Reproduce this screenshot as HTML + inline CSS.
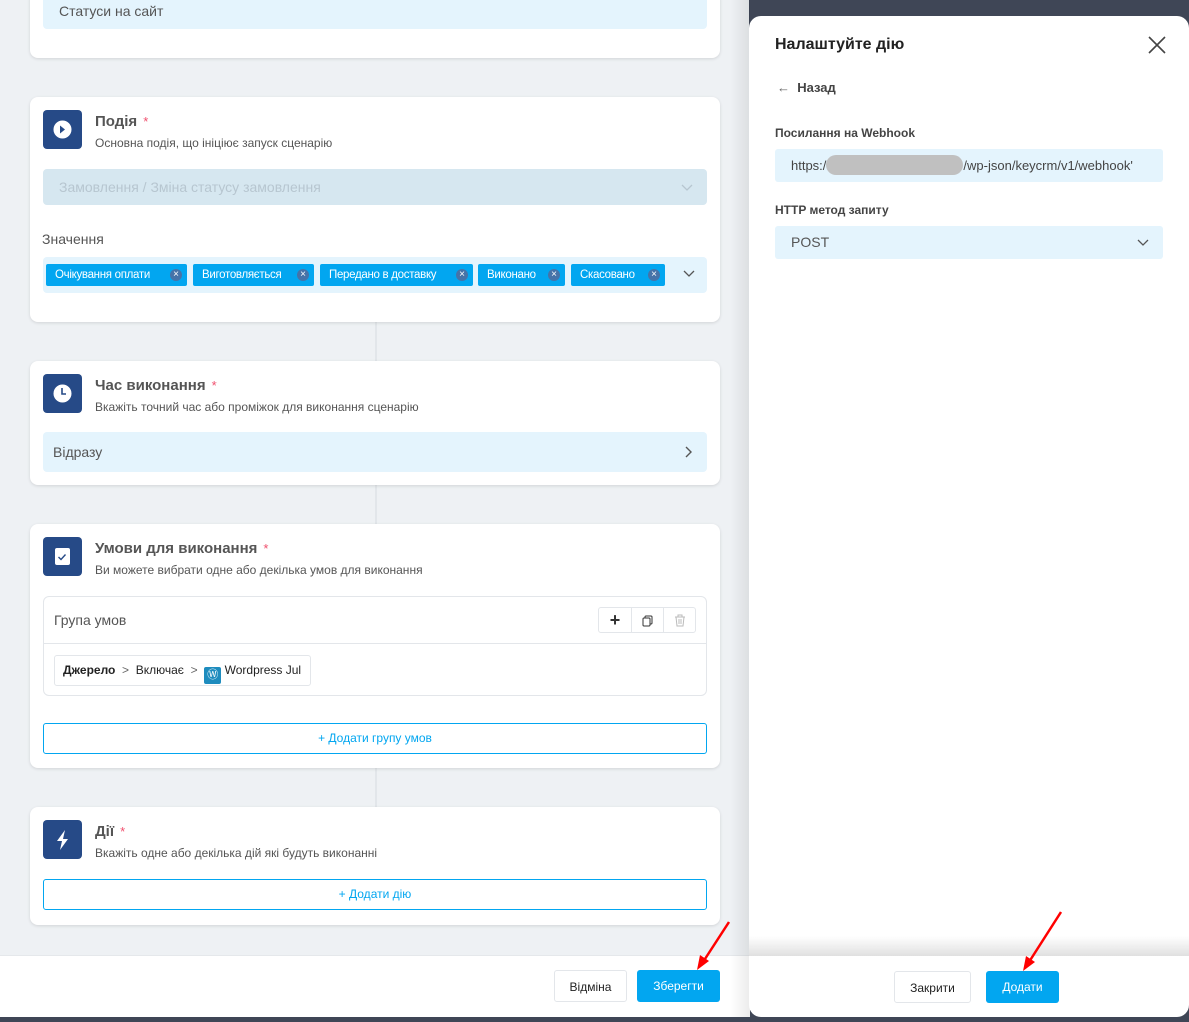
<!DOCTYPE html>
<html><head><meta charset="utf-8"><style>
*{box-sizing:border-box;margin:0;padding:0}
body{width:1189px;height:1022px;overflow:hidden;background:#eef1f4;font-family:"Liberation Sans","DejaVu Sans",sans-serif;position:relative;color:#333}
.card{position:absolute;left:30px;width:690px;background:#fff;border-radius:8px;box-shadow:0 1px 3px rgba(0,0,0,.12)}
.line{position:absolute;left:375px;width:2px;background:#e2e6ea}
.ic{position:absolute;left:13px;width:39px;height:39px;background:#264a87;border-radius:4px}
.t{position:absolute;left:65px;font-weight:bold;font-size:15px;color:#555}
.t b{color:#f0506e;font-weight:normal;margin-left:6px;font-size:13px}
.s{position:absolute;left:65px;font-size:12px;color:#555}
.fld{position:absolute;left:13px;width:664px;background:#e4f4fd;border-radius:4px;font-size:14px;color:#555}
.tag{position:absolute;top:7px;height:22px;background:#02a6f0;color:#fff;font-size:11.5px;letter-spacing:-.3px;border-radius:2px;line-height:22px;padding-left:9px;white-space:nowrap}
.tag i{position:absolute;right:5px;top:5px;width:12px;height:12px;border-radius:6px;background:#4673a8;font-style:normal;font-size:10px;line-height:12px;text-align:center;letter-spacing:0}
.btnO{position:absolute;left:13px;width:664px;height:31px;border:1px solid #02a6f0;border-radius:3px;color:#02a6f0;font-size:12px;text-align:center;line-height:29px}
.b{position:absolute;height:32px;border-radius:3px;font-size:12px;text-align:center;line-height:32px}
</style></head><body>
<div style="position:absolute;left:749px;top:0;width:440px;height:1022px;background:#3f4656"></div>
<div style="position:absolute;left:0;top:1017px;width:1189px;height:5px;background:#3f4656"></div>

<div class="card" style="top:-10px;height:68px"><div class="fld" style="top:0;height:39px;line-height:42px;padding-left:16px">Статуси на сайт</div></div>

<div class="line" style="top:322px;height:39px"></div>
<div class="line" style="top:485px;height:39px"></div>
<div class="line" style="top:768px;height:39px"></div>

<div class="card" style="top:97px;height:225px">
<div class="ic" style="top:13px"><svg width="39" height="39"><circle cx="19.5" cy="19.5" r="9" fill="#fff"/><path d="M17 15.5l5 4-5 4z" fill="#264a87"/></svg></div>
<div class="t" style="top:16px">Подія<b>*</b></div>
<div class="s" style="top:39px">Основна подія, що ініціює запуск сценарію</div>
<div class="fld" style="top:72px;height:36px;background:#d6e7f0;color:#b7c6d0;line-height:36px;padding-left:16px">Замовлення / Зміна статусу замовлення<svg style="position:absolute;right:14px;top:15px" width="12" height="8"><path d="M1 1l5 5 5-5" stroke="#b7c6d0" fill="none" stroke-width="1.3"/></svg></div>
<div style="position:absolute;left:12px;top:134px;font-size:14px;color:#555">Значення</div>
<div class="fld" style="top:160px;height:36px">
<div class="tag" style="left:3px;width:141px">Очікування оплати<i>×</i></div>
<div class="tag" style="left:150px;width:121px">Виготовляється<i>×</i></div>
<div class="tag" style="left:277px;width:153px">Передано в доставку<i>×</i></div>
<div class="tag" style="left:435px;width:87px">Виконано<i>×</i></div>
<div class="tag" style="left:528px;width:94px">Скасовано<i>×</i></div>
<svg style="position:absolute;left:640px;top:13px" width="12" height="8"><path d="M1 1l5 5 5-5" stroke="#555" fill="none" stroke-width="1.3"/></svg>
</div></div>

<div class="card" style="top:361px;height:124px">
<div class="ic" style="top:13px"><svg width="39" height="39"><circle cx="19.5" cy="19.5" r="9" fill="#fff"/><path d="M19 14v6h4" stroke="#264a87" fill="none" stroke-width="1.6"/></svg></div>
<div class="t" style="top:16px">Час виконання<b>*</b></div>
<div class="s" style="top:39px">Вкажіть точний час або проміжок для виконання сценарію</div>
<div class="fld" style="top:71px;height:40px;line-height:40px;padding-left:10px">Відразу<svg style="position:absolute;right:14px;top:14px" width="8" height="12"><path d="M1 1l5 5-5 5" stroke="#555" fill="none" stroke-width="1.4"/></svg></div>
</div>

<div class="card" style="top:524px;height:244px">
<div class="ic" style="top:13px"><svg width="39" height="39"><rect x="12" y="11" width="15" height="17" rx="2" fill="#fff"/><path d="M15.5 20l2.5 2.5 4.5-5" stroke="#264a87" fill="none" stroke-width="1.4"/></svg></div>
<div class="t" style="top:16px">Умови для виконання<b>*</b></div>
<div class="s" style="top:39px">Ви можете вибрати одне або декілька умов для виконання</div>
<div style="position:absolute;left:13px;top:72px;width:664px;height:100px;border:1px solid #e3e6ea;border-radius:6px">
<div style="position:absolute;left:10px;top:15px;font-size:14px;color:#555">Група умов</div>
<div style="position:absolute;right:10px;top:10px;width:98px;height:26px;border:1px solid #e3e6ea;border-radius:3px;display:flex">
<div style="width:33px;border-right:1px solid #e3e6ea;text-align:center;font-size:18px;line-height:24px;font-weight:bold;color:#333">+</div>
<div style="width:32px;border-right:1px solid #e3e6ea;position:relative"><svg style="position:absolute;left:10px;top:7px" width="12" height="12"><rect x="3" y="1" width="7" height="8" rx="1" fill="none" stroke="#333"/><rect x="1" y="3" width="7" height="8" rx="1" fill="#fff" stroke="#333"/></svg></div>
<div style="flex:1;position:relative"><svg style="position:absolute;left:10px;top:6px" width="12" height="13"><path d="M1 3h10M4 3V1h4v2M2 3l1 9h6l1-9M5 5v5M7 5v5" stroke="#bbb" fill="none"/></svg></div>
</div>
<div style="position:absolute;left:0;top:46px;width:662px;border-top:1px solid #e3e6ea"></div>
<div style="position:absolute;left:10px;top:58px;width:257px;height:31px;border:1px solid #e3e6ea;border-radius:3px;font-size:12px;line-height:29px;padding-left:8px;color:#222;white-space:nowrap"><b>Джерело</b> <span style="color:#666">&nbsp;&gt;&nbsp;</span> Включає <span style="color:#666">&nbsp;&gt;&nbsp;</span> <span style="display:inline-block;width:17px;height:17px;background:#1e8cbe;vertical-align:-4px;border-radius:2px;color:#fff;font-size:11px;text-align:center;line-height:17px;font-family:serif">Ⓦ</span> Wordpress Jul</div>
</div>
<div class="btnO" style="top:199px">+ Додати групу умов</div>
</div>

<div class="card" style="top:807px;height:118px">
<div class="ic" style="top:13px"><svg width="39" height="39"><path d="M22 10l-8 11h5l-2 9 8-11h-5z" fill="#fff"/></svg></div>
<div class="t" style="top:16px">Дії<b>*</b></div>
<div class="s" style="top:39px">Вкажіть одне або декілька дій які будуть виконанні</div>
<div class="btnO" style="top:72px">+ Додати дію</div>
</div>

<div style="position:absolute;left:0;top:955px;width:750px;height:62px;background:#fff;border-top:1px solid #e5e8eb"></div>
<div class="b" style="left:554px;top:970px;width:73px;border:1px solid #e3e6ea;background:#fff;color:#222">Відміна</div>
<div class="b" style="left:637px;top:970px;width:83px;background:#02a6f0;color:#fff">Зберегти</div>
<div style="position:absolute;left:730px;top:0;width:20px;height:1017px;background:linear-gradient(90deg,rgba(0,0,0,0),rgba(0,0,0,.08))"></div>

<div style="position:absolute;left:749px;top:16px;width:440px;height:1001px;background:#fff;border-radius:12px;overflow:hidden">
<div style="position:absolute;left:26px;top:20px;font-size:16px;font-weight:bold;color:#222">Налаштуйте дію</div>
<svg style="position:absolute;left:399px;top:20px" width="18" height="18"><path d="M1 1l16 16M17 1L1 17" stroke="#444" stroke-width="1.6"/></svg>
<div style="position:absolute;left:28px;top:64px;font-size:13px;color:#444;font-weight:bold"><span style="font-weight:normal;color:#666">←</span>&nbsp; Назад</div>
<div style="position:absolute;left:26px;top:110px;font-size:12px;font-weight:bold;color:#444">Посилання на Webhook</div>
<div style="position:absolute;left:26px;top:133px;width:388px;height:33px;background:#e4f4fd;border-radius:3px;font-size:13px;color:#444;line-height:33px;padding-left:16px">https:/<span style="display:inline-block;width:137px;height:20px;background:#c0c0c0;border-radius:10px;vertical-align:-5px"></span>/wp-json/keycrm/v1/webhook'</div>
<div style="position:absolute;left:26px;top:187px;font-size:12px;font-weight:bold;color:#444">HTTP метод запиту</div>
<div style="position:absolute;left:26px;top:210px;width:388px;height:33px;background:#e4f4fd;border-radius:3px;font-size:14px;color:#555;line-height:33px;padding-left:16px">POST<svg style="position:absolute;right:14px;top:13px" width="12" height="8"><path d="M1 1l5 5 5-5" stroke="#555" fill="none" stroke-width="1.3"/></svg></div>
<div style="position:absolute;left:0;top:920px;width:440px;height:20px;background:linear-gradient(180deg,rgba(0,0,0,0),rgba(0,0,0,.12))"></div>
<div class="b" style="left:145px;top:955px;width:77px;border:1px solid #e3e6ea;background:#fff;color:#222">Закрити</div>
<div class="b" style="left:237px;top:955px;width:73px;background:#02a6f0;color:#fff">Додати</div>
</div>

<svg style="position:absolute;left:0;top:0" width="1189" height="1022">
<path d="M729 922L703 962" stroke="#f00" stroke-width="2.5"/><path d="M697 970l3-15 9 6z" fill="#f00"/>
<path d="M1061 912L1029 962" stroke="#f00" stroke-width="2.5"/><path d="M1023 971l3-15 9 6z" fill="#f00"/>
</svg>
</body></html>
